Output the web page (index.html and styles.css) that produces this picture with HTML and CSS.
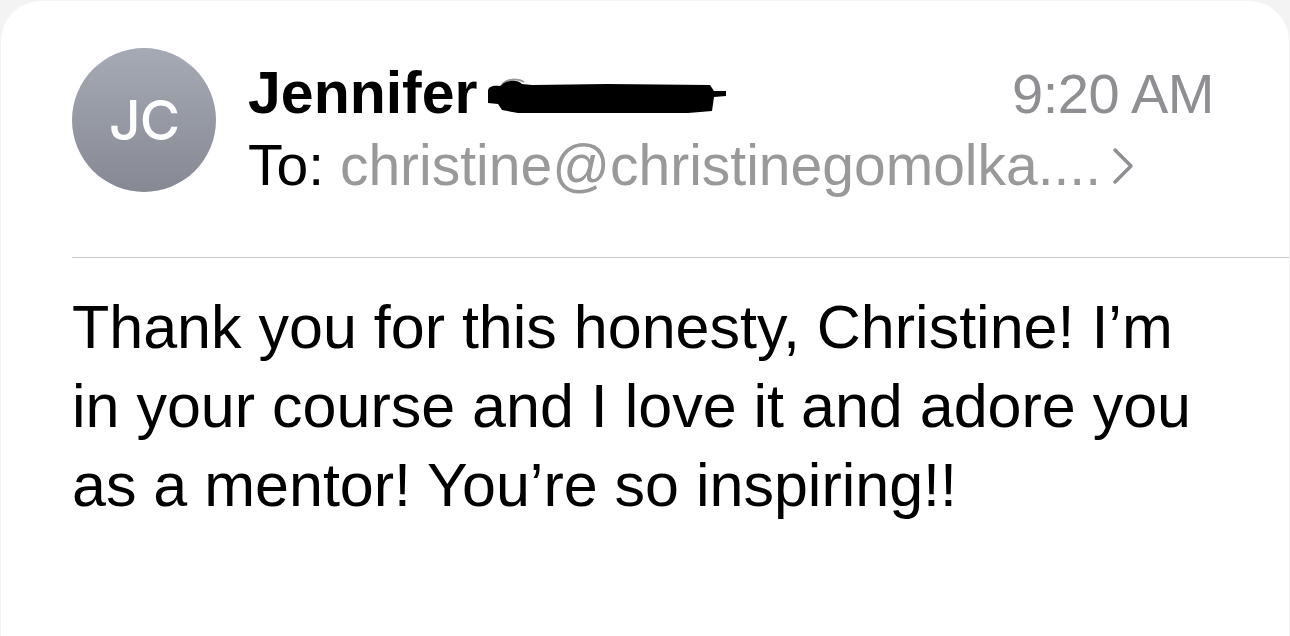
FILE: index.html
```html
<!DOCTYPE html>
<html lang="en">
<head>
<meta charset="utf-8">
<title>Mail</title>
<link rel="stylesheet" href="styles.css">
</head>
<body>
<div class="screen">
  <div class="card">
    <header class="header">
      <div class="avatar"><span>JC</span></div>
      <div class="info">
        <div class="row-name">
          <div class="name">Jennifer<svg class="redact" width="238" height="36" viewBox="0 0 238 36"><path d="M14 8 C18 2 30 1 36 5" fill="none" stroke="#9a9a9a" stroke-width="2"/><path d="M0 14 C0 9 6 8 12 9 L16 6 C22 3 30 3 34 7 L44 8 L120 7 L222 8 L226 14 L238 14 L238 19 L226 20 L224 34 L200 36 L30 36 L14 33 L10 27 L0 26 Z" fill="#000"/></svg></div>
          <div class="time">9:20 AM</div>
        </div>
        <div class="row-to">
          <span class="to-label">To:</span> <span class="to-addr">christine@christinegomolka....</span><svg class="chev" width="22" height="38" viewBox="0 0 22 38"><polyline points="3,3 19,19 3,35" fill="none" stroke="#8e8e93" stroke-width="3.5" stroke-linecap="round" stroke-linejoin="round"/></svg>
        </div>
      </div>
    </header>
    <div class="divider"></div>
    <div class="body-text">
      Thank you for this honesty, Christine! I’m<br>
      in your course and I love it and adore you<br>
      as a mentor! You’re so inspiring!!
    </div>
  </div>
</div>
</body>
</html>
```

FILE: styles.css
```css
html, body {
  margin: 0;
  padding: 0;
}

body {
  background: #f3f3f3;
  font-family: "Liberation Sans", Arial, sans-serif;
  color: #000;
}

.screen {
  width: 1290px;
  height: 636px;
  box-sizing: border-box;
  padding: 1px 1px 0 1px;
  overflow: hidden;
}

.card {
  background: #fff;
  height: 635px;
  border-radius: 40px 40px 0 0;
}

.header {
  display: flex;
  padding: 47px 75px 0 71px;
  gap: 32px;
}

.avatar {
  width: 144px;
  height: 144px;
  flex: 0 0 144px;
  border-radius: 50%;
  background: linear-gradient(to bottom, #a6aab5, #868993);
  display: flex;
  align-items: center;
  justify-content: center;
}

.avatar span {
  color: #fff;
  font-family: Inter, "Liberation Sans", sans-serif;
  font-weight: 500;
  font-size: 55px;
  line-height: 1;
  letter-spacing: -1px;
}

.info {
  flex: 1;
  padding-top: 9px;
}

.row-name {
  display: flex;
  justify-content: space-between;
  align-items: baseline;
  height: 72px;
}

.name {
  font-size: 59px;
  font-weight: 700;
  line-height: 72px;
}

.redact {
  margin-left: 10px;
  vertical-align: baseline;
}

.time {
  font-size: 56px;
  line-height: 72px;
  color: #8e8e93;
  letter-spacing: -0.5px;
}

.row-to {
  font-size: 57px;
  line-height: 72px;
  white-space: nowrap;
}

.to-label {
  color: #000;
}

.to-addr {
  color: #999999;
}

.chev {
  margin-left: 11px;
  vertical-align: baseline;
}

.divider {
  margin: 56px 0 0 71px;
  height: 1px;
  background: #c8c8cc;
}

.body-text {
  margin-top: 30px;
  padding-left: 71px;
  font-size: 61px;
  line-height: 79px;
  white-space: nowrap;
}
```
